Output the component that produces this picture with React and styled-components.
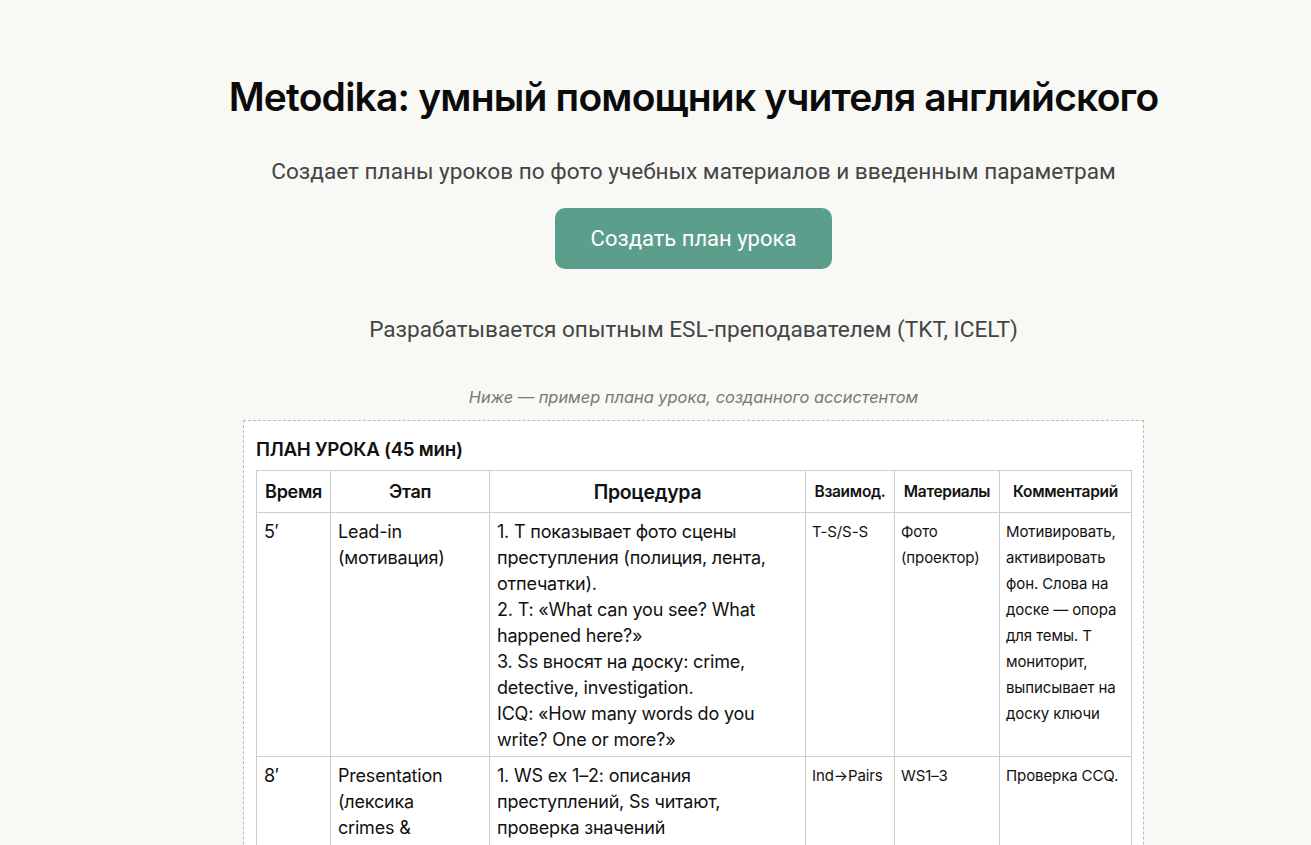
import styled, { createGlobalStyle } from "styled-components";

const GlobalStyle = createGlobalStyle`
  html, body {
    margin: 0;
    padding: 0;
    background: #f8f8f5;
  }
  body {
    font-family: Inter, "Noto Sans", sans-serif;
    color: #111;
  }
`;

const Page = styled.div`
  min-height: 100vh;
  padding: 70px 0 40px 76px;
  display: flex;
  flex-direction: column;
  align-items: center;
  box-sizing: border-box;
`;

const Title = styled.h1`
  margin: 0;
  font-family: Inter, sans-serif;
  font-size: 39px;
  font-weight: 600;
  letter-spacing: -0.8px;
  line-height: 54px;
  color: #0b0b0b;
`;

const Lead = styled.p`
  margin: ${(p) => p.$mt || "0"} 0 0;
  font-family: Roboto, sans-serif;
  font-size: 22.6px;
  line-height: 30px;
  color: #444;
`;

const MainButton = styled.button`
  margin-top: 21px;
  width: 277px;
  height: 61px;
  border: none;
  border-radius: 10px;
  background: #5c9e8c;
  color: #fff;
  font-family: Roboto, sans-serif;
  font-size: 22px;
  cursor: pointer;
`;

const Caption = styled.p`
  margin: 41px 0 0;
  font-family: Inter, sans-serif;
  font-style: italic;
  font-size: 16.4px;
  line-height: 22px;
  color: #777;
`;

const ExampleBox = styled.div`
  margin-top: 12px;
  width: 901px;
  box-sizing: border-box;
  background: #fff;
  border: 1px dashed #bbb;
  padding: 12px 13px 20px 12px;
`;

const PlanTitle = styled.h3`
  margin: 4px 0 7px;
  font-family: Inter, sans-serif;
  font-size: 18.8px;
  font-weight: 600;
  letter-spacing: -0.3px;
  line-height: 26px;
`;

const Table = styled.table`
  width: 875px;
  border-collapse: collapse;
  table-layout: fixed;
`;

const Th = styled.th`
  border: 1px solid #ccc;
  height: 41px;
  padding: 0 4px;
  font-family: Inter, sans-serif;
  font-size: ${(p) => p.$size}px;
  font-weight: 600;
  letter-spacing: -0.3px;
  text-align: center;
  white-space: nowrap;
  color: #111;
`;

const Td = styled.td`
  border: 1px solid #ccc;
  padding: 6px ${(p) => (p.$small ? "6px" : "7px")} 3px;
  vertical-align: top;
  font-family: Inter, sans-serif;
  font-size: ${(p) => (p.$small ? "15px" : "18px")};
  letter-spacing: ${(p) => (p.$small ? "-0.1px" : "-0.2px")};
  line-height: 26px;
  color: #111;
`;

const Line = styled.div``;

const cols = [
  { label: "Время", w: 74, size: 18 },
  { label: "Этап", w: 159, size: 18 },
  { label: "Процедура", w: 316, size: 19.5 },
  { label: "Взаимод.", w: 89, size: 15.5 },
  { label: "Материалы", w: 105, size: 15.5 },
  { label: "Комментарий", w: 132, size: 15.5 },
];

const rows = [
  {
    time: "5′",
    stage: ["Lead-in", "(мотивация)"],
    proc: [
      "1. Т показывает фото сцены преступления (полиция, лента, отпечатки).",
      "2. Т: «What can you see? What happened here?»",
      "3. Ss вносят на доску: crime, detective, investigation.",
      "ICQ: «How many words do you write? One or more?»",
    ],
    inter: "T-S/S-S",
    mat: "Фото (проектор)",
    comment:
      "Мотивировать, активировать фон. Слова на доске — опора для темы. Т мониторит, выписывает на доску ключи",
  },
  {
    time: "8′",
    stage: ["Presentation", "(лексика", "crimes & criminals)"],
    proc: [
      "1. WS ex 1–2: описания преступлений, Ss читают, проверка значений словосочетаний (CCQ).",
      "2. Т моделирует произношение, хоровое и индивидуальное повторение.",
    ],
    inter: "Ind→Pairs",
    mat: "WS1–3",
    comment: "Проверка CCQ.",
  },
];

export default function App() {
  return (
    <>
      <GlobalStyle />
      <Page>
        <Title>Metodika: умный помощник учителя английского</Title>
        <Lead $mt="33px">
          Создает планы уроков по фото учебных материалов и введенным параметрам
        </Lead>
        <MainButton>Создать план урока</MainButton>
        <Lead $mt="46px">
          Разрабатывается опытным ESL-преподавателем (TKT, ICELT)
        </Lead>
        <Caption>Ниже — пример плана урока, созданного ассистентом</Caption>
        <ExampleBox>
          <PlanTitle>ПЛАН УРОКА (45 мин)</PlanTitle>
          <Table>
            <colgroup>
              {cols.map((c) => (
                <col key={c.label} style={{ width: c.w }} />
              ))}
            </colgroup>
            <thead>
              <tr>
                {cols.map((c) => (
                  <Th key={c.label} $size={c.size}>
                    {c.label}
                  </Th>
                ))}
              </tr>
            </thead>
            <tbody>
              {rows.map((r) => (
                <tr key={r.time}>
                  <Td>{r.time}</Td>
                  <Td>
                    {r.stage.map((s, i) => (
                      <Line key={i}>{s}</Line>
                    ))}
                  </Td>
                  <Td>
                    {r.proc.map((line, i) => (
                      <Line key={i}>{line}</Line>
                    ))}
                  </Td>
                  <Td $small>{r.inter}</Td>
                  <Td $small>{r.mat}</Td>
                  <Td $small>{r.comment}</Td>
                </tr>
              ))}
            </tbody>
          </Table>
        </ExampleBox>
      </Page>
    </>
  );
}
